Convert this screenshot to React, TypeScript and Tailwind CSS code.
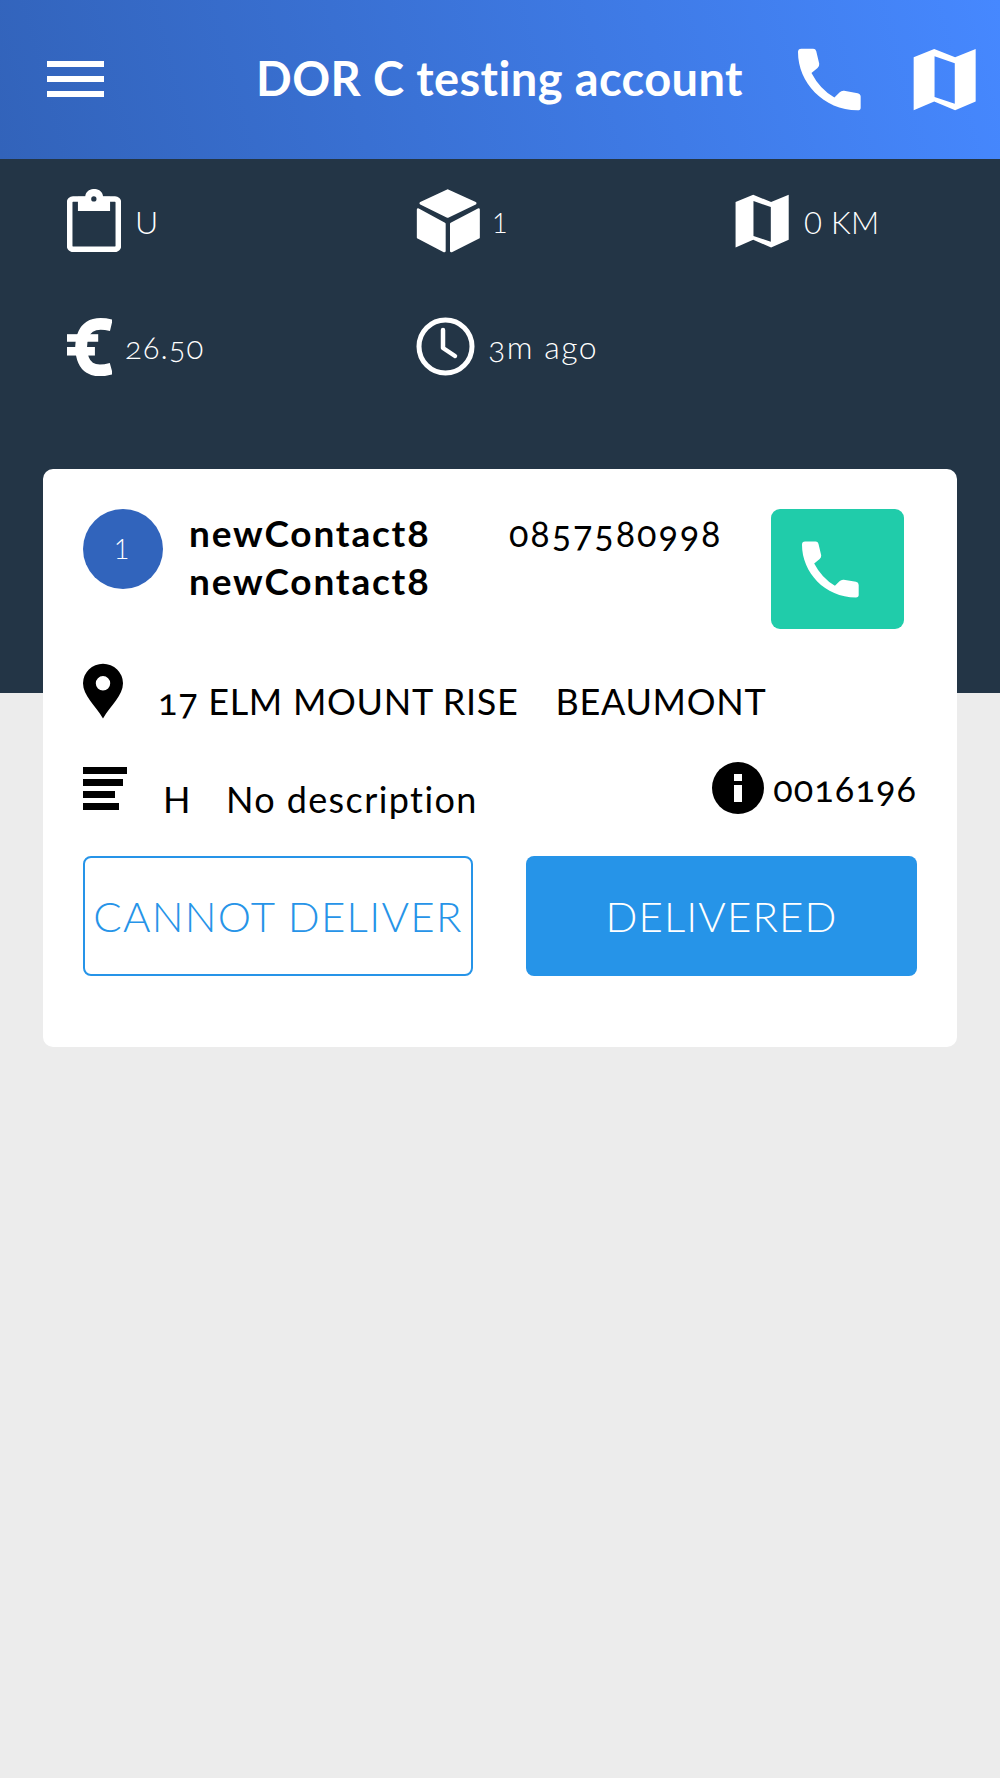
const font = { fontFamily: '"Lato", "Open Sans", sans-serif' };

const PHONE =
  "M65 60 H100 Q107 60 109 67 L118 105 Q119 112 113 117 L95 132 Q120 180 163 205 L178 190 Q184 184 192 185 L232 192 Q241 194 241 202 V235 Q241 243 232 243 C130 243 55 160 55 70 Q55 60 65 60 Z";

function Phone({ className }: { className: string }) {
  return (
    <svg viewBox="55 58 187 187" className={className} fill="#fff">
      <path d={PHONE} />
    </svg>
  );
}

function MapIcon({ className }: { className: string }) {
  return (
    <svg viewBox="398 58 190 188" className={className} fill="#fff">
      <path
        fillRule="evenodd"
        d="M400 85 L462 60 L525 85 L587 60 V218 L525 245 L462 218 L400 245 Z M463 82 V205 L524 225 V103 Z"
      />
    </svg>
  );
}

function Clipboard() {
  return (
    <svg viewBox="35 42 163 190" className="w-[54px] h-[63px] shrink-0">
      <rect x="43" y="72" width="147" height="152" rx="10" fill="none" stroke="#fff" strokeWidth="17" />
      <path d="M68 65 H90 C92 34 142 34 144 65 H165 V108 H68 Z" fill="#fff" />
      <circle cx="116" cy="72" r="8" fill="#233546" />
    </svg>
  );
}

function Cube() {
  return (
    <svg viewBox="30 42 195 193" className="w-[65px] h-[64px] shrink-0" fill="#fff" stroke="#fff" strokeWidth="8" strokeLinejoin="round">
      <path d="M125 47 L208 85 L125 125 L44 85 Z" />
      <path d="M36 104 L115 147 V229 L36 188 Z" />
      <path d="M218 104 L136 147 V229 L218 188 Z" />
    </svg>
  );
}

function Euro() {
  return (
    <svg viewBox="35 38 137 172" className="w-[45px] h-[58px] shrink-0" fill="#fff">
      <path d="M170 58 C115 45 80 60 78 124 C80 190 115 205 170 190" fill="none" stroke="#fff" strokeWidth="36" />
      <rect x="35" y="85" width="95" height="23" />
      <rect x="35" y="124" width="85" height="26" />
    </svg>
  );
}

function Clock() {
  return (
    <svg viewBox="0 0 59 59" className="w-[59px] h-[59px] shrink-0" fill="none" stroke="#fff">
      <circle cx="29.5" cy="29.5" r="26.5" strokeWidth="5" />
      <path d="M27 13 V31 L39 39" strokeWidth="4.5" strokeLinecap="round" strokeLinejoin="round" />
    </svg>
  );
}

function Pin() {
  return (
    <svg viewBox="38 38 122 167" className="w-[40px] h-[56px] shrink-0">
      <path
        fillRule="evenodd"
        fill="#000"
        d="M99 205 C75 165 38 135 38 98 A61 60 0 0 1 160 98 C160 135 123 165 99 205 Z M99 76 A22 22 0 1 0 99 120 A22 22 0 1 0 99 76 Z"
      />
    </svg>
  );
}

function Info() {
  return (
    <svg viewBox="0 0 52 52" className="w-[52px] h-[52px] shrink-0">
      <circle cx="26" cy="26" r="26" fill="#000" />
      <rect x="22" y="12" width="8" height="7" fill="#fff" />
      <rect x="22" y="23" width="8" height="17" fill="#fff" />
    </svg>
  );
}

export default function App() {
  return (
    <div className="min-h-[1778px] bg-[#ececec]" style={font}>
      <header className="h-[159px] flex items-center pl-[47px] pr-[24px] bg-linear-75 from-[#3263ba] to-[#4688ff]">
        <div className="w-[57px] flex flex-col gap-[9px] -mt-[2px]">
          <div className="h-[6px] bg-white" />
          <div className="h-[6px] bg-white" />
          <div className="h-[6px] bg-white" />
        </div>
        <h1 className="ml-[152px] w-[488px] whitespace-nowrap text-white font-bold text-[47px] leading-none -mt-[2px] tracking-[0.4px]">DOR C testing account</h1>
        <Phone className="ml-[53px] w-[65px] h-[63px] -mt-[1px] shrink-0" />
        <MapIcon className="ml-[51px] w-[63px] h-[63px] shrink-0" />
      </header>

      <section className="h-[534px] bg-[#233546] pt-[30px] pl-[67px] text-white font-light">
        <div className="flex h-[63px] items-center">
          <div className="w-[349px] flex items-center">
            <Clipboard />
            <span className="ml-[14px] mt-[2px] text-[32px] leading-none">U</span>
          </div>
          <div className="w-[319px] flex items-center">
            <Cube />
            <span className="ml-[11px] mt-[3px] text-[27px] leading-none">1</span>
          </div>
          <div className="flex items-center">
            <MapIcon className="w-[54px] h-[54px] shrink-0" />
            <span className="ml-[15px] mt-[3px] text-[31px] leading-none tracking-[0.3px]">0 KM</span>
          </div>
        </div>
        <div className="flex h-[59px] items-center mt-[65px]">
          <div className="w-[349px] flex items-center">
            <Euro />
            <span className="ml-[13px] mt-[1px] text-[31px] leading-none tracking-[1px] oldstyle-nums">26.50</span>
          </div>
          <div className="flex items-center">
            <Clock />
            <span className="ml-[13px] mt-[1px] text-[32px] leading-none tracking-[1.5px] oldstyle-nums">3m ago</span>
          </div>
        </div>
      </section>

      <main className="-mt-[224px] mx-[43px] h-[578px] bg-white rounded-[10px] px-[40px] pt-[40px] text-black">
        <div className="flex items-start h-[120px]">
          <div className="w-[80px] h-[80px] rounded-full bg-[#3164bc] flex items-center justify-center text-white font-light text-[27px] pr-[3px]">1</div>
          <div className="ml-[26px] w-[320px] font-bold text-[37px] leading-[48px] tracking-[1.8px]">
            <div>newContact8</div>
            <div>newContact8</div>
          </div>
          <div className="w-[262px] text-[36px] leading-[48px] tracking-[1.9px] oldstyle-nums">0857580998</div>
          <div className="w-[133px] h-[120px] rounded-[9px] bg-[#20ccaa] flex items-center justify-center pr-[14px]">
            <Phone className="w-[57px] h-[57px]" />
          </div>
        </div>

        <div className="flex items-start mt-[34px] h-[62px]">
          <Pin />
          <div className="ml-[35px] mt-[16px] flex text-[36px] leading-[44px] tracking-[0.7px] whitespace-nowrap oldstyle-nums">
            <span>17 ELM MOUNT RISE</span>
            <span className="ml-[37px]">BEAUMONT</span>
          </div>
        </div>

        <div className="flex items-start mt-[37px] h-[52px]">
          <div className="w-[44px] mt-[5px] flex flex-col gap-[5px]">
            <div className="h-[7px] w-[44px] bg-black" />
            <div className="h-[7px] w-[40px] bg-black" />
            <div className="h-[7px] w-[32px] bg-black" />
            <div className="h-[7px] w-[36px] bg-black" />
          </div>
          <div className="ml-[36px] mt-[15px] flex text-[36px] leading-[44px] tracking-[1.4px] whitespace-nowrap">
            <span>H</span>
            <span className="ml-[34px]">No description</span>
          </div>
          <div className="ml-auto flex items-start">
            <Info />
            <span className="ml-[9px] mt-[4px] text-[36px] leading-[44px] tracking-[1.1px] oldstyle-nums">0016196</span>
          </div>
        </div>

        <div className="flex justify-between mt-[42px]">
          <button className="w-[390px] h-[120px] rounded-[8px] border-2 border-[#2694e8] text-[#2694e8] text-[42px] tracking-[1.3px] font-light whitespace-nowrap">CANNOT DELIVER</button>
          <button className="w-[391px] h-[120px] rounded-[8px] bg-[#2694e8] text-white text-[42px] tracking-[1.1px] font-light whitespace-nowrap">DELIVERED</button>
        </div>
      </main>
    </div>
  );
}
